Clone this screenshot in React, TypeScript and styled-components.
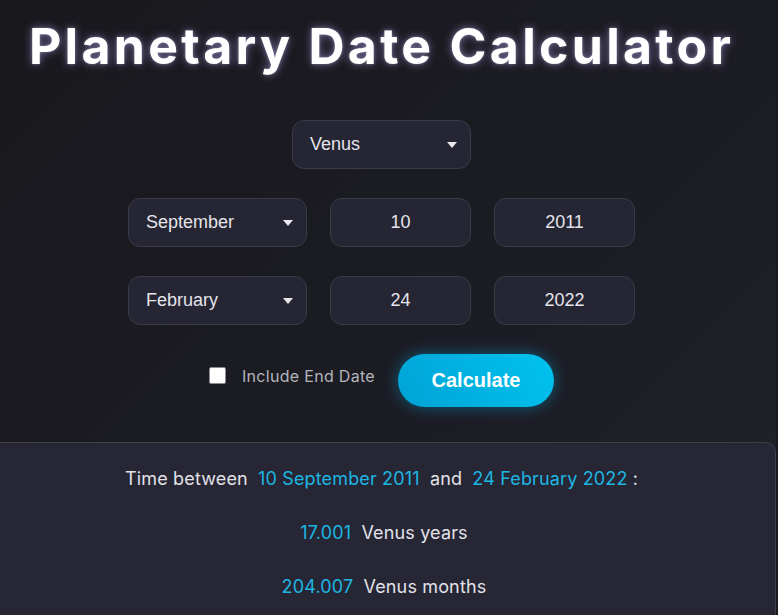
import styled, { createGlobalStyle } from "styled-components";

const GlobalStyle = createGlobalStyle`
  html, body {
    margin: 0;
    padding: 0;
    background: #1a1a21;
    overflow: hidden;
  }
  body {
    font-family: "Inter", "Liberation Sans", sans-serif;
  }
`;

const Page = styled.div`
  width: 789px;
  margin-left: -13px;
  min-height: 615px;
  background: linear-gradient(135deg, #18181d 0%, #1c1c24 60%, #22222b 100%);
  display: flex;
  flex-direction: column;
  align-items: center;
`;

const Title = styled.h1`
  margin: 14px 0 0;
  font-family: "Inter", "Liberation Sans", sans-serif;
  font-weight: 700;
  font-size: 50px;
  letter-spacing: 3.3px;
  line-height: 64px;
  color: #ffffff;
  text-shadow: 0 0 10px rgba(190, 170, 255, 0.55), 0 0 3px rgba(255, 255, 255, 0.3);
`;

const Form = styled.div`
  margin-top: 42px;
  display: flex;
  flex-direction: column;
  align-items: center;
  gap: 29px;
`;

const Row = styled.div`
  display: flex;
  gap: 23px;
`;

const Field = styled.div<{ $w: number }>`
  width: ${(p) => p.$w}px;
  height: 49px;
  box-sizing: border-box;
  background: #252533;
  border: 1px solid #3b3b48;
  border-radius: 12px;
  display: flex;
  align-items: center;
  justify-content: center;
  font-family: "Liberation Sans", Arial, sans-serif;
  font-size: 18px;
  color: #e4e4ea;
`;

const SelectBox = styled(Field)`
  justify-content: space-between;
  padding: 0 13px 0 17px;
`;

const Caret = styled.span`
  width: 0;
  height: 0;
  border-left: 5px solid transparent;
  border-right: 5px solid transparent;
  border-top: 6px solid #e8e8ee;
  margin-top: 1px;
`;

const ActionRow = styled.div`
  display: flex;
  align-items: center;
`;

const CheckLabel = styled.label`
  display: flex;
  align-items: center;
  gap: 16px;
  font-size: 16px;
  letter-spacing: 0.3px;
  color: #b4b4bc;
  margin: 0 23px 10px 0;
`;

const Box = styled.span`
  width: 17px;
  height: 17px;
  box-sizing: border-box;
  background: #ffffff;
  border: 1px solid #8a8a92;
  border-radius: 2px;
`;

const Button = styled.button`
  width: 156px;
  height: 53px;
  border: none;
  border-radius: 27px;
  background: linear-gradient(60deg, #00a3d6 0%, #00c2ee 100%);
  color: #ffffff;
  font-family: "Liberation Sans", Arial, sans-serif;
  font-weight: 700;
  font-size: 20px;
  box-shadow: 0 0 16px rgba(0, 170, 230, 0.45);
`;

const Panel = styled.div`
  margin-top: 35px;
  width: 100%;
  box-sizing: border-box;
  background: #262635;
  border: 1px solid #3d3d4c;
  border-radius: 10px;
  padding: 25px 0 40px;
  display: flex;
  flex-direction: column;
  align-items: center;
  gap: 32px;
`;

const Line = styled.div`
  font-size: 18px;
  line-height: 22px;
  color: #e2e2e8;
  letter-spacing: 0.15px;
`;

const Hl = styled.span`
  color: #1db6e2;
  margin: 0 5px;
`;

export default function App() {
  return (
    <>
      <GlobalStyle />
      <Page>
        <Title>Planetary Date Calculator</Title>
        <Form>
          <SelectBox $w={179}>
            Venus
            <Caret />
          </SelectBox>
          <Row>
            <SelectBox $w={179}>
              September
              <Caret />
            </SelectBox>
            <Field $w={141}>10</Field>
            <Field $w={141}>2011</Field>
          </Row>
          <Row>
            <SelectBox $w={179}>
              February
              <Caret />
            </SelectBox>
            <Field $w={141}>24</Field>
            <Field $w={141}>2022</Field>
          </Row>
          <ActionRow>
            <CheckLabel>
              <Box />
              Include End Date
            </CheckLabel>
            <Button>Calculate</Button>
          </ActionRow>
        </Form>
        <Panel>
          <Line>
            Time between <Hl>10 September 2011</Hl> and <Hl>24 February 2022</Hl>:
          </Line>
          <Line>
            <Hl>17.001</Hl> Venus years
          </Line>
          <Line>
            <Hl>204.007</Hl> Venus months
          </Line>
        </Panel>
      </Page>
    </>
  );
}
